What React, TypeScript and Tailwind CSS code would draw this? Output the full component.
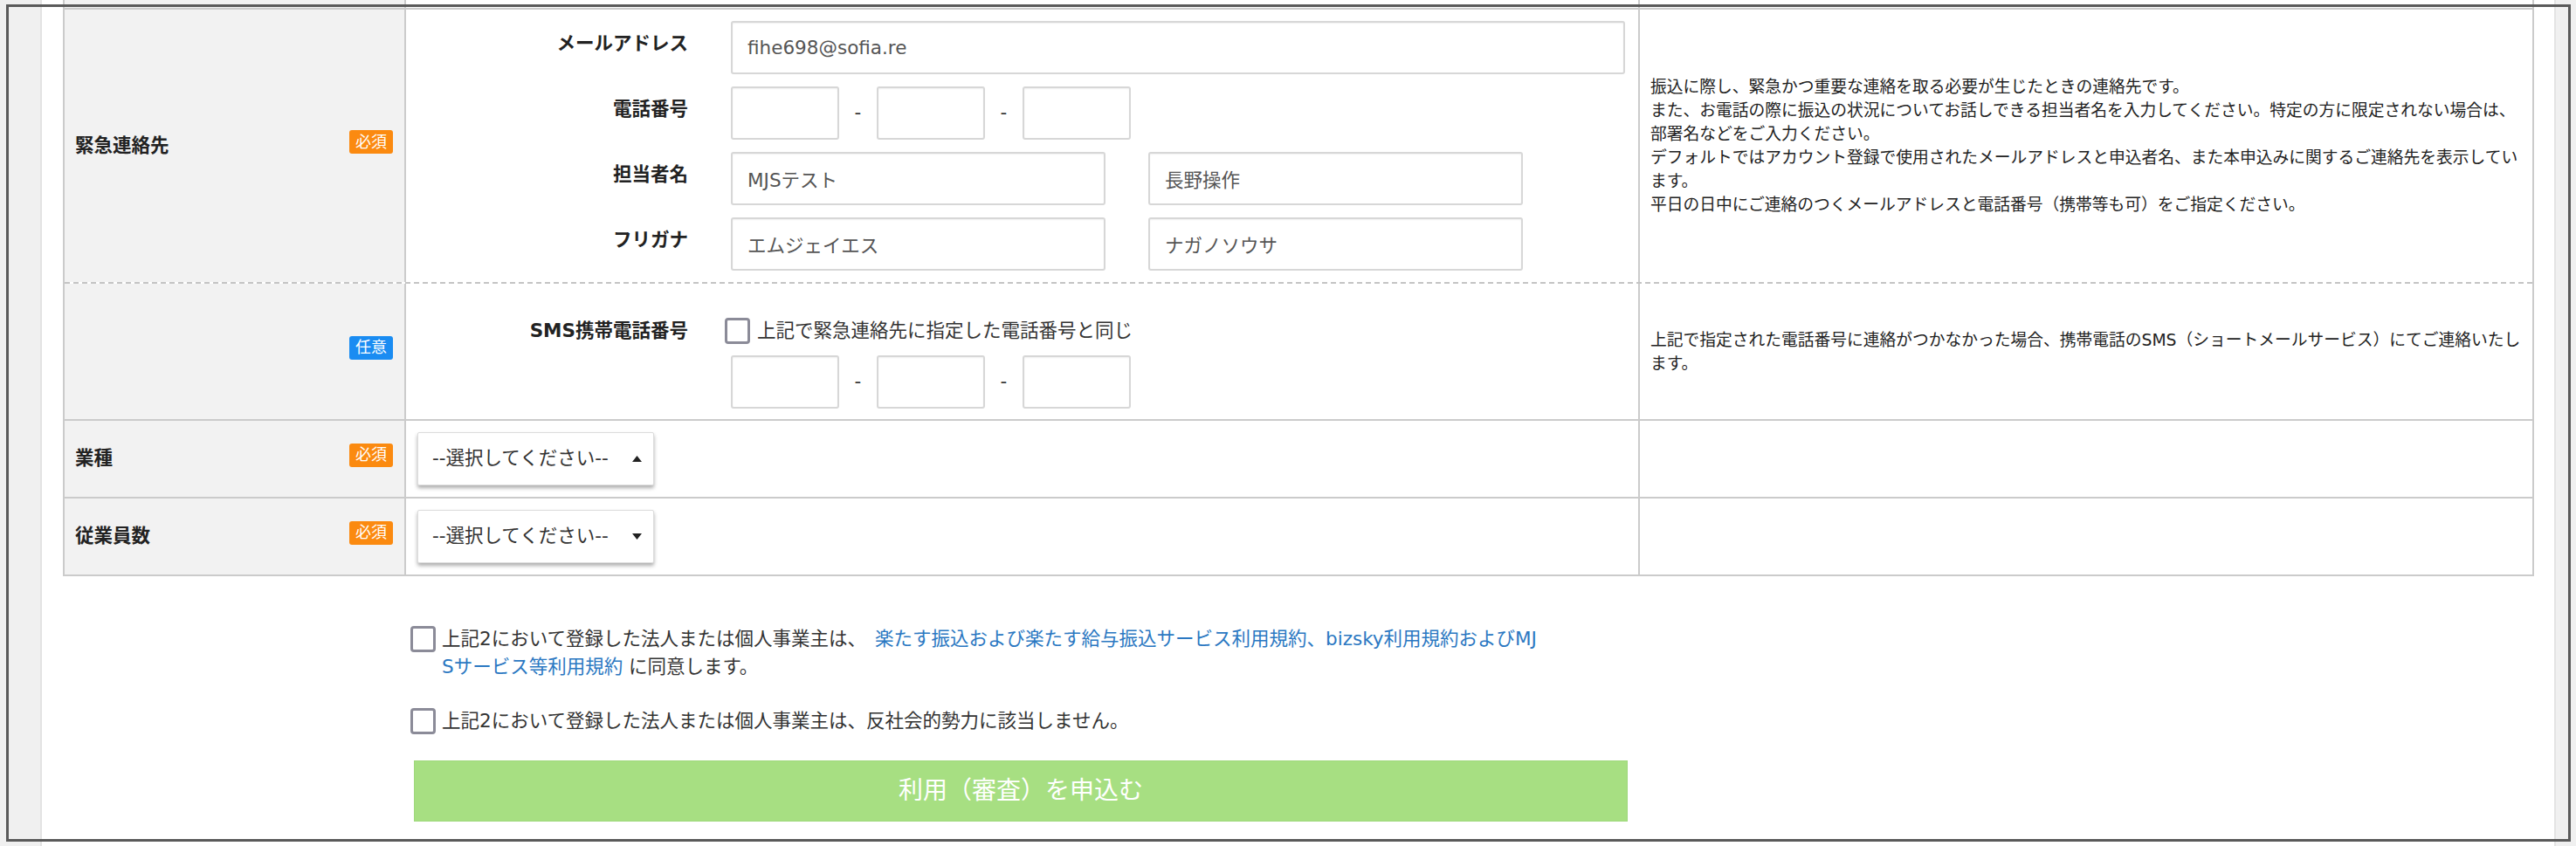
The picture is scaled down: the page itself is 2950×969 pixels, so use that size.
import React from 'react';

// Application form: emergency contact section + agreement
const Badge = ({ optional }: { optional?: boolean }) => (
    <span
        className={`mb-[9px] flex h-[27px] w-[50px] shrink-0 items-center justify-center rounded-[3px] text-[18px] leading-none text-white ${
            optional ? 'bg-[#1a8cf2]' : 'bg-[#fb8a10]'
        }`}
    >
        {optional ? '任意' : '必須'}
    </span>
);

const TextInput = ({ value, className }: { value?: string; className: string }) => (
    <input
        readOnly
        defaultValue={value}
        className={`h-[61px] rounded-[3px] border-2 border-[#d7d7d7] bg-white px-[17px] text-[21.5px] text-[#555] shadow-[inset_0_1px_2px_rgba(0,0,0,0.06)] outline-none ${className}`}
    />
);

const PhoneInputs = () => (
    <div className="flex items-center">
        <TextInput className="w-[124px]" />
        <span className="w-[43px] text-center text-[21.5px] text-[#333]">-</span>
        <TextInput className="w-[124px]" />
        <span className="w-[43px] text-center text-[21.5px] text-[#333]">-</span>
        <TextInput className="w-[124px]" />
    </div>
);

const Checkbox = ({ className = '' }: { className?: string }) => (
    <span className={`block h-[30px] w-[29px] shrink-0 rounded-[4px] border-[3px] border-[#8b8b98] bg-white ${className}`} />
);

const Select = ({ up }: { up?: boolean }) => (
    <div className="flex h-[61px] w-[271px] items-center rounded-[2px] border border-[#dcdcdc] bg-white pl-[16px] pr-[13px] text-[21.5px] text-[#333] shadow-[0_3px_4px_rgba(0,0,0,0.32)]">
        <span>--選択してください--</span>
        <svg className="ml-auto" width="11" height="7" viewBox="0 0 11 7">
            {up ? <polygon points="5.5,0 11,7 0,7" fill="#222" /> : <polygon points="0,0 11,0 5.5,7" fill="#222" />}
        </svg>
    </div>
);

const FieldLabel = ({ children }: { children: React.ReactNode }) => (
    <span className="w-[310px] shrink-0 pb-[8px] text-right text-[21.5px] font-bold text-[#222]">{children}</span>
);

const Row = ({
    label,
    optional,
    children,
    note,
    className,
}: {
    label?: string;
    optional?: boolean;
    children: React.ReactNode;
    note?: React.ReactNode;
    className: string;
}) => (
    <div className={`flex border-[#cbcbcb] ${className}`}>
        <div className="flex w-[391px] shrink-0 items-center justify-between border-r-2 border-[#cbcbcb] bg-[#f2f2f2] pl-[12px] pr-[13px]">
            <span className="text-[21.5px] font-bold text-[#222]">{label}</span>
            <Badge optional={optional} />
        </div>
        <div className="w-[1413px] shrink-0 border-r-2 border-[#cbcbcb] pl-[13px] pr-[15px]">{children}</div>
        <div className="flex flex-1 items-center pl-[12px] pr-[10px] text-[18.75px] leading-[27px] text-[#222]">
            <p>{note}</p>
        </div>
    </div>
);

export default function App() {
    return (
        <div className="relative h-[969px] w-[2950px] overflow-hidden bg-[#f0f0f0] font-['DejaVu_Sans','Noto_Sans_CJK_JP',sans-serif]">
            <div className="flex h-full">
                <div className="w-[46px] shrink-0" />
                <div className="flex-1 border-x-2 border-[#e3e3e3] bg-white pl-[24px] pr-[23px]">
                    <div className="border-x-2 border-[#cbcbcb]">
                        {/* tail of the previous row */}
                        <div className="flex h-[9px]">
                            <div className="w-[391px] border-r-2 border-[#cbcbcb] bg-[#f2f2f2]" />
                            <div className="w-[1413px] border-r-2 border-[#cbcbcb]" />
                            <div className="flex-1" />
                        </div>

                        <Row
                            label="緊急連絡先"
                            className="h-[316px] border-y-2 border-b-[#c4c4c4] [border-bottom-style:dashed]"
                            note={
                                <>
                                    振込に際し、緊急かつ重要な連絡を取る必要が生じたときの連絡先です。
                                    <br />
                                    また、お電話の際に振込の状況についてお話しできる担当者名を入力してください。特定の方に限定されない場合は、部署名などをご入力ください。
                                    <br />
                                    デフォルトではアカウント登録で使用されたメールアドレスと申込者名、また本申込みに関するご連絡先を表示しています。
                                    <br />
                                    平日の日中にご連絡のつくメールアドレスと電話番号（携帯等も可）をご指定ください。
                                </>
                            }
                        >
                            <div className="flex flex-col gap-[14px] pt-[13px]">
                                <div className="flex items-center gap-[49px]">
                                    <FieldLabel>メールアドレス</FieldLabel>
                                    <TextInput value="fihe698@sofia.re" className="flex-1" />
                                </div>
                                <div className="flex items-center gap-[49px]">
                                    <FieldLabel>電話番号</FieldLabel>
                                    <PhoneInputs />
                                </div>
                                <div className="flex items-center gap-[49px]">
                                    <FieldLabel>担当者名</FieldLabel>
                                    <div className="flex gap-[49px]">
                                        <TextInput value="MJSテスト" className="w-[429px]" />
                                        <TextInput value="長野操作" className="w-[429px]" />
                                    </div>
                                </div>
                                <div className="flex items-center gap-[49px]">
                                    <FieldLabel>フリガナ</FieldLabel>
                                    <div className="flex gap-[49px]">
                                        <TextInput value="エムジェイエス" className="w-[429px]" />
                                        <TextInput value="ナガノソウサ" className="w-[429px]" />
                                    </div>
                                </div>
                            </div>
                        </Row>

                        <Row
                            optional
                            className="h-[157px] border-b-2"
                            note="上記で指定された電話番号に連絡がつかなかった場合、携帯電話のSMS（ショートメールサービス）にてご連絡いたします。"
                        >
                            <div className="pt-[38px]">
                                <div className="flex h-[32px] items-center gap-[42px]">
                                    <span className="w-[310px] shrink-0 text-right text-[21.5px] font-bold text-[#222]">SMS携帯電話番号</span>
                                    <div className="flex items-center gap-[8px]">
                                        <Checkbox />
                                        <span className="text-[21.5px] text-[#333]">上記で緊急連絡先に指定した電話番号と同じ</span>
                                    </div>
                                </div>
                                <div className="mt-[12px] pl-[359px]">
                                    <PhoneInputs />
                                </div>
                            </div>
                        </Row>

                        <Row label="業種" className="h-[89px] border-b-2">
                            <div className="pt-[13px]">
                                <Select up />
                            </div>
                        </Row>

                        <Row label="従業員数" className="h-[89px] border-b-2">
                            <div className="pt-[13px]">
                                <Select />
                            </div>
                        </Row>
                    </div>

                    <div className="pl-[398px] pt-[56px] text-[21.5px] leading-[32px] text-[#333]">
                        <div className="flex items-start gap-[7px]">
                            <Checkbox className="mt-[1px]" />
                            <p>
                                上記2において登録した法人または個人事業主は、
                                <a className="ml-[10px] text-[#2b78c2]">
                                    楽たす振込および楽たす給与振込サービス利用規約、bizsky利用規約およびMJ
                                    <br />
                                    Sサービス等利用規約
                                </a>{' '}
                                に同意します。
                            </p>
                        </div>
                        <div className="mt-[30px] flex items-start gap-[7px]">
                            <Checkbox className="mt-[1px]" />
                            <p>上記2において登録した法人または個人事業主は、反社会的勢力に該当しません。</p>
                        </div>
                        <button className="ml-[4px] mt-[29px] flex h-[70px] w-[1390px] items-center justify-center border border-[#9fd87c] bg-[#a7df82] text-[28px] text-white">
                            利用（審査）を申込む
                        </button>
                    </div>
                </div>
                <div className="w-[23px] shrink-0" />
            </div>

            {/* selection frame drawn over the page */}
            <div className="pointer-events-none absolute left-[7px] top-[5px] h-[959px] w-[2937px] border-[3px] border-[#5a5a5a]" />
        </div>
    );
}
